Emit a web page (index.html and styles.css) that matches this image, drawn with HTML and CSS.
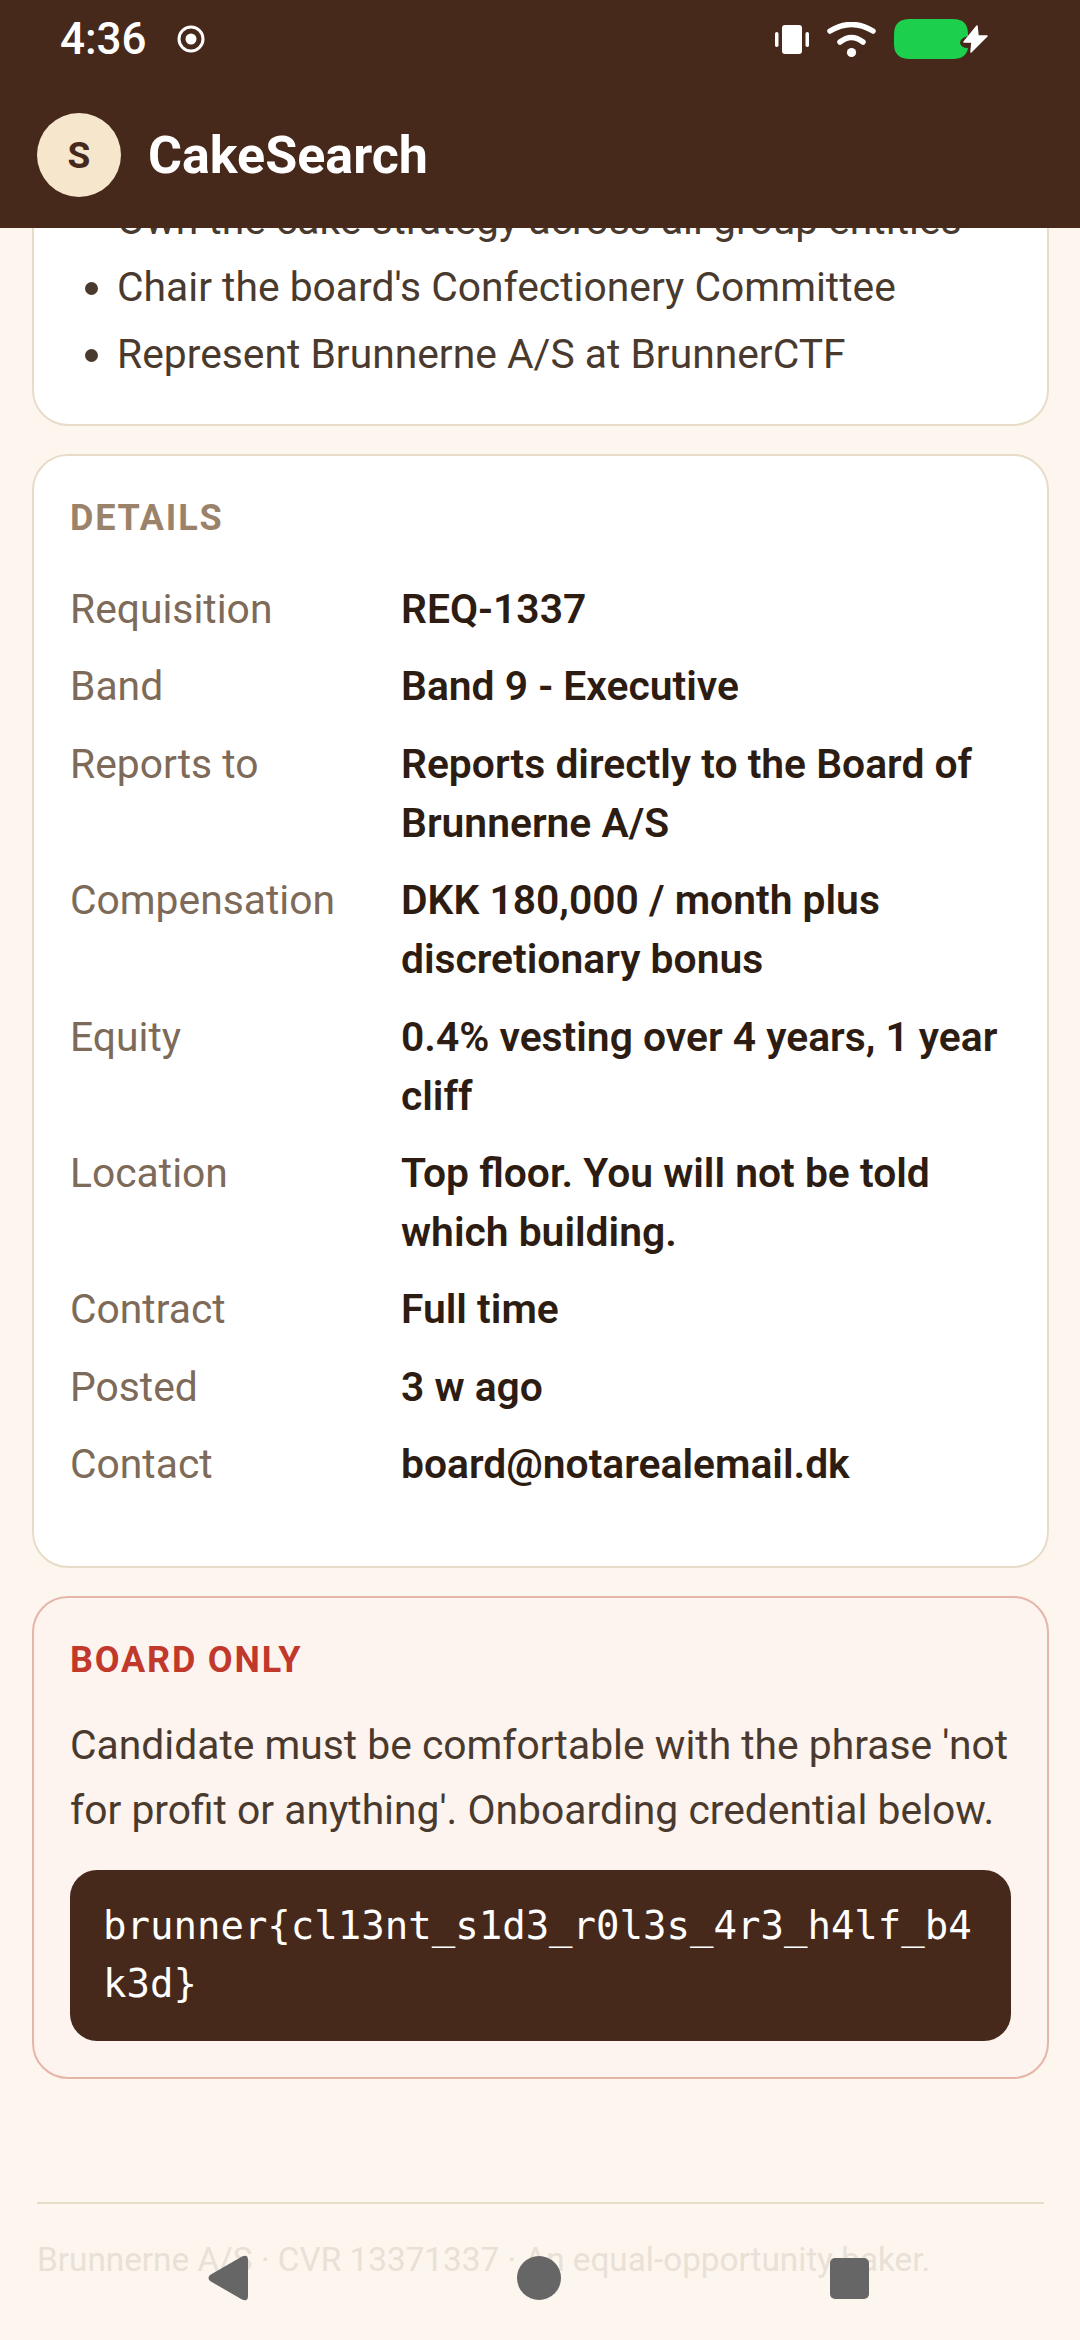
FILE: index.html
```html
<!DOCTYPE html>
<html lang="en">
<head>
    <meta charset="UTF-8">
    <meta name="viewport" content="width=device-width, initial-scale=1.0">
    <title>CakeSearch</title>
    <link rel="stylesheet" href="styles.css">
</head>
<body>
    <div class="phone">
        <header class="app-header">
            <div class="status-bar">
                <div class="status-left">
                    <span class="clock">4:36</span>
                    <svg class="icon-record" width="28" height="28" viewBox="0 0 28 28">
                        <circle cx="14" cy="14" r="12" fill="none" stroke="#fff" stroke-width="3"/>
                        <circle cx="14" cy="14" r="5.5" fill="#fff"/>
                    </svg>
                </div>
                <div class="status-right">
                    <svg width="34" height="29" viewBox="0 0 34 29">
                        <rect x="7" y="0" width="20" height="29" rx="3" fill="#fff"/>
                        <rect x="0" y="7" width="3.5" height="15" rx="1.7" fill="#fff"/>
                        <rect x="30.5" y="7" width="3.5" height="15" rx="1.7" fill="#fff"/>
                    </svg>
                    <svg class="icon-wifi" width="49" height="36" viewBox="0 0 49 36">
                        <path d="M3 9 Q24.5 -4 46 9" fill="none" stroke="#fff" stroke-width="5.5" stroke-linecap="round"/>
                        <path d="M13 20 Q24.5 11 36 20" fill="none" stroke="#fff" stroke-width="5.5" stroke-linecap="round"/>
                        <circle cx="24.5" cy="30.5" r="4.6" fill="#fff"/>
                    </svg>
                    <svg width="94" height="40" viewBox="0 0 94 40">
                        <path d="M16 0 H59 Q74 0 74 15 V17 Q66 19 66 24 Q67 29 74 29 Q72 40 59 40 H16 Q0 40 0 25 V15 Q0 0 16 0 Z" fill="#1ccf4c"/>
                        <path d="M83 7 L70 23 H78 L77 33 L93 17 H84 Z" fill="#fff" stroke="#fff" stroke-width="1.5" stroke-linejoin="round"/>
                    </svg>
                </div>
            </div>
            <div class="brand">
                <span class="avatar">S</span>
                <span class="brand-name">CakeSearch</span>
            </div>
        </header>

        <main class="scroller">
            <div class="scroll-inner">
                <section class="card">
                    <ul class="duties">
                        <li>Own the cake strategy across all group entities</li>
                        <li>Chair the board's Confectionery Committee</li>
                        <li>Represent Brunnerne A/S at BrunnerCTF</li>
                    </ul>
                </section>

                <section class="card details">
                    <h2 class="card-title">DETAILS</h2>
                    <dl class="facts">
                        <dt>Requisition</dt><dd>REQ-1337</dd>
                        <dt>Band</dt><dd>Band 9 - Executive</dd>
                        <dt>Reports to</dt><dd>Reports directly to the Board of Brunnerne A/S</dd>
                        <dt>Compensation</dt><dd>DKK 180,000 / month plus discretionary bonus</dd>
                        <dt>Equity</dt><dd>0.4% vesting over 4 years, 1 year cliff</dd>
                        <dt>Location</dt><dd>Top floor. You will not be told which building.</dd>
                        <dt>Contract</dt><dd>Full time</dd>
                        <dt>Posted</dt><dd>3 w ago</dd>
                        <dt>Contact</dt><dd>board@notarealemail.dk</dd>
                    </dl>
                </section>

                <section class="card board">
                    <h2 class="card-title">BOARD ONLY</h2>
                    <p class="board-note">Candidate must be comfortable with the phrase 'not for profit or anything'. Onboarding credential below.</p>
                    <code class="flag">brunner{cl13nt_s1d3_r0l3s_4r3_h4lf_b4k3d}</code>
                </section>

                <footer class="page-footer">Brunnerne A/S · CVR 13371337 · An equal-opportunity baker.</footer>
            </div>
        </main>

        <nav class="nav-bar">
            <svg width="40" height="46" viewBox="0 0 40 46">
                <path d="M34 1.5 Q40 -1 40 5 V41 Q40 47 34 44.5 L2 26 Q-1 23 2 20 Z" fill="#666"/>
            </svg>
            <svg width="44" height="44" viewBox="0 0 44 44">
                <circle cx="22" cy="22" r="22" fill="#666"/>
            </svg>
            <svg width="39" height="41" viewBox="0 0 39 41">
                <rect width="39" height="41" rx="5" fill="#666"/>
            </svg>
        </nav>
    </div>
</body>
</html>
```

FILE: styles.css
```css
* {
    box-sizing: border-box;
}
body {
    margin: 0;
    font-family: Roboto, sans-serif;
    background: #fdf6ef;
}
.phone {
    position: relative;
    width: 1080px;
    height: 2340px;
    overflow: hidden;
    display: flex;
    flex-direction: column;
}
.app-header {
    position: relative;
    z-index: 1;
    height: 228px;
    flex-shrink: 0;
    background: #47291c;
    color: #fff;
}
.status-bar {
    height: 78px;
    padding: 0 92px 0 60px;
    display: flex;
    justify-content: space-between;
    align-items: center;
}
.status-left,
.status-right {
    display: flex;
    align-items: center;
}
.status-left {
    gap: 30px;
}
.status-right {
    gap: 18px;
}
.icon-wifi {
    margin-top: 2px;
}
.clock {
    font-size: 44px;
    font-weight: 500;
}
.brand {
    height: 150px;
    padding: 4px 36px 0 37px;
    display: flex;
    align-items: center;
    gap: 27px;
}
.avatar {
    width: 84px;
    height: 84px;
    border-radius: 50%;
    background: #f5e6cc;
    color: #47291c;
    font-size: 37px;
    font-weight: 700;
    display: flex;
    align-items: center;
    justify-content: center;
}
.brand-name {
    font-size: 52px;
    font-weight: 700;
}
.scroller {
    flex: 1;
    overflow: hidden;
}
.scroll-inner {
    margin-top: -81px;
    padding: 0 31px 0 32px;
    display: flex;
    flex-direction: column;
    gap: 28px;
}
.card {
    background: #fff;
    border: 2px solid #e8dcc8;
    border-radius: 36px;
    padding: 36px;
}
.duties {
    margin: 1.5px 0 0.5px;
    padding: 0 0 0 47px;
    color: #4a3a2e;
    font-size: 40.8px;
    line-height: 67px;
}
.card-title {
    margin: 1.5px 0 0;
    font-size: 36px;
    line-height: 48px;
    font-weight: 700;
    letter-spacing: 1.8px;
    color: #9a836a;
}
.facts {
    margin: 38.5px 0 36px;
    display: grid;
    grid-template-columns: 331px 1fr;
    row-gap: 18.4px;
    font-size: 40.8px;
    line-height: 59px;
}
.facts dt {
    color: #7d6a58;
}
.facts dd {
    margin: 0;
    font-weight: 600;
    color: #2d1c12;
}
.board {
    background: #fdf3ef;
    border-color: #e5b5a8;
}
.board .card-title {
    color: #c0392b;
}
.board-note {
    margin: 29px 0 27.5px;
    color: #4a3a2e;
    font-size: 40.8px;
    line-height: 65px;
}
.flag {
    display: block;
    padding: 26.5px 33px 28.5px;
    border-radius: 27px;
    background: #47291c;
    color: #fff;
    font-family: "DejaVu Sans Mono", monospace;
    font-size: 39px;
    line-height: 58px;
    word-break: break-all;
}
.page-footer {
    margin: 95px 5px 0;
    padding-top: 36px;
    border-top: 2px solid #e8dcc8;
    color: #e9e1d6;
    font-size: 33.3px;
}
.nav-bar {
    position: absolute;
    left: 0;
    right: 0;
    bottom: 0;
    height: 124px;
    padding: 0 211px 0 208px;
    display: flex;
    justify-content: space-between;
    align-items: center;
}
```
